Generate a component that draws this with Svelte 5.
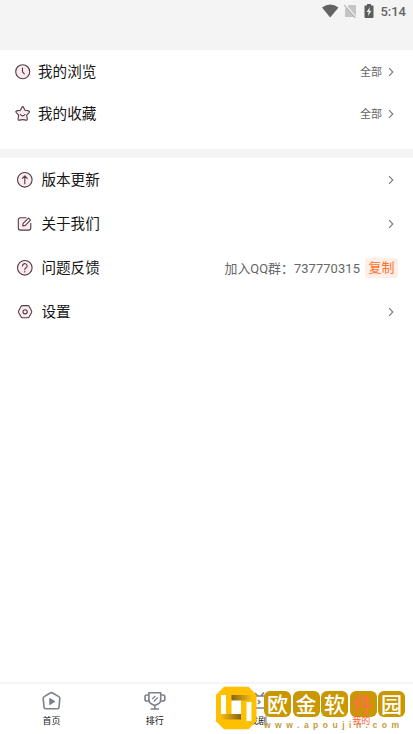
<script lang="ts">
  const library = [
    { label: '我的浏览', icon: 'clock' },
    { label: '我的收藏', icon: 'star' },
  ];

  const settings = [
    { label: '版本更新', icon: 'update' },
    { label: '关于我们', icon: 'edit' },
    { label: '问题反馈', icon: 'help', qq: '737770315' },
    { label: '设置', icon: 'gear' },
  ];

  const tabs = [
    { label: '首页', icon: 'home' },
    { label: '排行', icon: 'trophy' },
    { label: '找剧', icon: 'tv' },
    { label: '我的', icon: 'me', active: true },
  ];

  const seals = ['欧', '金', '软', '件', '园'];
</script>

{#snippet chevron()}
  <svg class="chevron" width="6" height="10" viewBox="0 0 6 10"><path d="M1 1.2 4.8 5 1 8.8" /></svg>
{/snippet}

{#snippet rowIcon(name: string)}
  <svg class="row-icon" width="18" height="18" viewBox="0 0 18 18">
    {#if name === 'clock'}
      <circle class="tint" cx="8.7" cy="8.7" r="7" />
      <path d="M8.5 5v3.9l1.8 2" />
    {:else if name === 'star'}
      <path class="tint" d="M7.8 2.4Q8.7.9 9.6 2.4L11 5.3l3.6.6q1.6.4.5 1.7l-2.4 2.5.6 3.8q.1 1.7-1.4 1.2-3.2-.9-6.4 0-1.5.5-1.4-1.2l.6-3.8-2.4-2.5q-1.1-1.3.5-1.7l3.6-.6z" />
      <path d="M6.4 9.7q2.3 2.2 4.6 0" />
    {:else if name === 'update'}
      <circle class="tint" cx="8.8" cy="8.8" r="7.3" />
      <path d="M8.8 12.8V5.1M6.4 7.3l2.4-2.4 2.4 2.4" />
    {:else if name === 'edit'}
      <path class="tint" d="M10 2.7H4.3a2 2 0 0 0-2 2v8.4a2 2 0 0 0 2 2h8.5a2 2 0 0 0 2-2V8.3" />
      <path class="pen" d="m6.7 11 .5-2.6 5.3-5.3 2 2-5.2 5.3z" />
    {:else if name === 'help'}
      <circle class="tint" cx="8.8" cy="8.8" r="7.3" />
      <path d="M6.5 6.9a2.3 2.3 0 1 1 3.6 1.9q-1.3.8-1.3 1.8M8.8 12.2v.7" />
    {:else}
      <path class="tint" d="M6.3 2.6h5.6q.8 0 1.2.7l2.4 4.4q.5 1 0 2l-2.4 4.4q-.4.7-1.2.7H6.3q-.8 0-1.2-.7L2.7 9.7q-.5-1 0-2l2.4-4.4q.4-.7 1.2-.7z" />
      <circle cx="9.1" cy="8.8" r="2.1" />
    {/if}
  </svg>
{/snippet}

<div class="screen">
  <header class="status-bar">
    <svg width="17" height="14" viewBox="0 0 17 14"><path fill="#636363" d="M0 3.5Q8.2-2.5 16.5 3.5L8.2 13.5z" /></svg>
    <svg class="sim" width="13" height="14" viewBox="0 0 13 14">
      <path fill="#c4c4c4" d="M5 1h6q1 0 1 1v11H1V5z" />
      <path stroke="#f4f4f4" stroke-width="1.6" d="m1 .5 11 13" />
      <path stroke="#adadad" stroke-width="1.1" d="m0 1 11.5 13" />
    </svg>
    <svg class="battery" width="10" height="14" viewBox="0 0 10 14">
      <path fill="#5d5d5d" d="M3 0h4v1.5h2q.5 0 .5.5v11q0 1-1 1h-7q-1 0-1-1V2q0-.5.5-.5h2z" />
      <path fill="#f4f4f4" d="M6 3 2.6 8h2L4 12l3.5-5.2H5.3z" />
    </svg>
    <span class="time">5:14</span>
  </header>

  <section class="library">
    {#each library as item}
      <div class="row">
        {@render rowIcon(item.icon)}
        <span class="label">{item.label}</span>
        <span class="all">全部</span>
        {@render chevron()}
      </div>
    {/each}
  </section>

  <section class="settings">
    {#each settings as item}
      <div class="row">
        {@render rowIcon(item.icon)}
        <span class="label">{item.label}</span>
        {#if item.qq}
          <span class="qq">加入QQ群：<span class="number">{item.qq}</span></span>
          <button class="copy">复制</button>
        {:else}
          {@render chevron()}
        {/if}
      </div>
    {/each}
  </section>

  <nav class="tabs">
    {#each tabs as tab}
      <div class="tab" class:active={tab.active}>
        <svg width="22" height="20" viewBox="0 0 22 20">
          {#if tab.icon === 'home'}
            <path d="M9.2 2Q10.5 1.2 11.8 2l6 3.6q1.2.8 1 2.1l-.8 8.4q-.2 1.7-1.6 1.7H4.6q-1.4 0-1.6-1.7l-.8-8.4q-.2-1.3 1-2.1z" />
            <path class="solid" d="M9 7q-.8-.3-.8.7v5.6q0 1 .8.7l4.8-3q.8-.5 0-1z" />
          {:else if tab.icon === 'trophy'}
            <path d="M4.9 1.7h11.8v7.1q0 3-2.7 4.2l-3.2 1.4L7.6 13q-2.7-1.2-2.7-4.2zM4.7 4H2.7Q1 4 1 5.8v2.4Q1 10 2.8 10h2.1M16.9 4H19q1.8 0 1.8 1.8v2.4q0 1.8-1.8 1.8h-2.1M10.8 14.4v3.3M6.6 18h8.4" />
            <path class="thin" d="m8.3 8 3-3M9.8 10.5l4-4" />
          {:else if tab.icon === 'tv'}
            <path d="m8 2 3 3M17 1.5l-3 3.5M4.5 5h13q2 0 2 2v8q0 2-2 2h-13q-2 0-2-2V7q0-2 2-2zM11 9l2 2-2 2" />
          {:else}
            <circle cx="11" cy="5.5" r="4" />
            <path class="solid" d="M3 17q0-6 8-6t8 6z" />
          {/if}
        </svg>
        <span class="tab-label">{tab.label}</span>
      </div>
    {/each}
  </nav>

  <div class="watermark">
    <svg width="43" height="44" viewBox="0 0 43 44">
      <defs>
        <linearGradient id="shade-a"><stop offset="0" stop-color="#85631c" /><stop offset="1" stop-color="#f8bd10" /></linearGradient>
        <linearGradient id="shade-b"><stop offset="0" stop-color="#f8bd10" /><stop offset="1" stop-color="#85631c" /></linearGradient>
      </defs>
      <path fill="#ffc000" d="M9 .8h24.5l8 8v26.4l-8 8H9l-8-8V8.8z" />
      <path fill="#fff" d="M6 9h5v19H6zM31.5 16h5v19h-5zM16.5 14H26v14h-9.5z" />
      <path fill="url(#shade-a)" d="M16.5 9h20v5.5h-20z" />
      <path fill="url(#shade-b)" d="M6 28h20v5.5H6z" />
    </svg>
    <div class="brand">
      <div class="seals">
        {#each seals as seal, i}
          <span class="seal" class:hot={i === 3}>{seal}</span>
        {/each}
      </div>
      <div class="site">www.apoujin.com</div>
    </div>
  </div>
</div>

<style>
  :global(body) { margin: 0; }
  .screen {
    position: relative; box-sizing: border-box; width: 413px; height: 734px; overflow: hidden;
    display: flex; flex-direction: column; background: #fff; color: #171717;
    font-family: Roboto, "Noto Sans CJK SC", sans-serif;
  }
  .status-bar {
    box-sizing: border-box; height: 50px; padding: 4px 7px 0 0; background: #f4f4f4;
    display: flex; align-items: flex-start; justify-content: flex-end;
  }
  .sim { margin-left: 5px; }
  .battery { margin-left: 7px; }
  .time { margin-left: 6px; color: #636363; font-size: 13px; font-weight: 500; line-height: 15px; }

  .row { display: flex; align-items: center; }
  .row-icon { fill: none; stroke: #4b4146; stroke-width: 1.1; stroke-linecap: round; stroke-linejoin: round; }
  .tint { fill: #fde9ee; }
  .pen { fill: #fff; }
  .label { flex: 1; font-size: 14.6px; line-height: 22px; }
  .chevron { fill: none; stroke: #777; stroke-width: 1.1; }

  .library { box-sizing: border-box; height: 108px; padding: 1px 19px 0 14px; border-bottom: 9px solid #f4f4f4; }
  .library .row { height: 42px; }
  .library .label { padding-left: 6px; }
  .all { margin-right: 6px; padding-bottom: 2px; color: #666; font-size: 11px; }

  .settings { flex: 1; padding: 0 19px 0 16px; }
  .settings .row { height: 44px; }
  .settings .label { padding-left: 7.4px; }
  .qq { padding-bottom: 2px; color: #666; font-size: 12.9px; white-space: nowrap; }
  .number { letter-spacing: 0.1px; }
  .copy {
    width: 33px; height: 20px; margin: 0 -4px 0 5px; padding: 0; border: 0; border-radius: 3px;
    background: #ffefe7; color: #ff702c; font: 13px/18px Roboto, "Noto Sans CJK SC", sans-serif;
  }

  .tabs { box-sizing: border-box; height: 52px; border-top: 2px solid #f5f5f5; display: flex; }
  .tab { flex: 1; padding-top: 7px; display: flex; flex-direction: column; align-items: center; font-size: 9px; line-height: 21px; }
  .tab svg { flex: none; fill: none; stroke: #7d818b; stroke-width: 1.6; stroke-linejoin: round; }
  .tab .solid { fill: #7d818b; stroke: none; }
  .tab .thin { stroke-width: 1.2; }
  .tab.active { color: #ff5a35; }
  .tab.active svg { stroke: #ff5a35; }
  .tab.active .solid { fill: #ff5a35; }
  .active .tab-label { position: relative; z-index: 2; }

  .watermark { position: absolute; left: 215px; top: 686px; display: flex; }
  .brand { margin: 5px 0 0 6px; }
  .seals { display: flex; gap: 1.5px; }
  .seal {
    width: 27px; height: 26px; border-radius: 6px; background: #c99700; color: #fff;
    font: 500 21px/25px "Noto Sans CJK SC", sans-serif; text-align: center;
  }
  .seal.hot { color: #ff7048; }
  .site { margin-top: 3px; color: #c59a3a; font: bold 8.5px/10px "Liberation Sans", sans-serif; letter-spacing: 4.5px; white-space: nowrap; }
</style>
